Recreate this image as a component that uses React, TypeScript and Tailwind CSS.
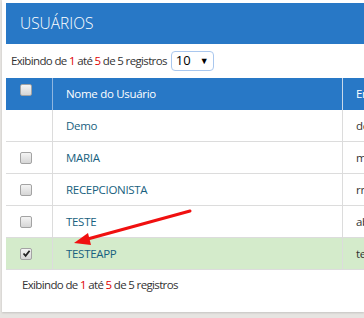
import React from 'react';

const rows = [
  { name: 'Demo', email: 'de', check: 'none' },
  { name: 'MARIA', email: 'm', check: 'off' },
  { name: 'RECEPCIONISTA', email: 'rn', check: 'off' },
  { name: 'TESTE', email: 'ab', check: 'off' },
  { name: 'TESTEAPP', email: 'te', check: 'on' },
];

function Box({ checked }: { checked?: boolean }) {
  return (
    <div className="w-[12px] h-[12px] rounded-[2px] border border-[#a3a3a3] bg-gradient-to-b from-[#f4f4f4] to-[#d6d6d6] flex items-center justify-center">
      {checked && (
        <svg width="9" height="9" viewBox="0 0 9 9">
          <path d="M1.5 4.5 L3.6 6.8 L7.6 1.8" stroke="#222" strokeWidth="1.8" fill="none" />
        </svg>
      )}
    </div>
  );
}

function Info() {
  return (
    <span>
      Exibindo de <span className="text-[#e00000]">1</span> até <span className="text-[#e00000]">5</span> de 5 registros
    </span>
  );
}

export default function App() {
  return (
    <div className="min-h-[318px] bg-[#e6e4e1] pl-[2px] overflow-hidden" style={{ fontFamily: '"Open Sans", sans-serif' }}>
      <div className="relative bg-white h-[312px] pl-[4px] pt-[3px] shadow-[0_1px_2px_rgba(0,0,0,0.15)]">
        <div className="h-[41px] bg-[#2878c6] flex items-center pl-[14px] text-white text-[15.5px] font-light">
          USUÁRIOS
        </div>
        <div className="h-[34px] flex items-center pl-[5px] text-[11.5px] text-[#333] tracking-[-0.65px]">
          <Info />
          <div className="ml-[4px] w-[43px] h-[20px] rounded-[4px] border border-[#a9c7ee] flex items-center justify-between px-[4px] text-[13px] text-black tracking-normal">
            <span>10</span>
            <span className="text-[9px]">▼</span>
          </div>
        </div>
        <div className="text-[11.5px] tracking-[-0.3px]">
          <div className="grid grid-cols-[47px_290px_1fr] h-[32px] bg-[#2878c6] text-white">
            <div className="flex items-start pt-[6px] pl-[14px] border-r border-[#8fb6e0]">
              <Box />
            </div>
            <div className="flex items-center pl-[13px] border-r border-[#c9d9ea]">Nome do Usuário</div>
            <div className="flex items-center pl-[13px]">Em</div>
          </div>
          {rows.map((r) => (
            <div
              key={r.name}
              className={`grid grid-cols-[47px_290px_1fr] h-[32px] border-b border-[#dcdcdc] ${r.check === 'on' ? 'bg-[#d4ebcb]' : 'bg-white'}`}
            >
              <div className="flex items-center pl-[14px] border-r border-[#dcdcdc]">
                {r.check !== 'none' && <Box checked={r.check === 'on'} />}
              </div>
              <div className="flex items-center pl-[13px] border-r border-[#dcdcdc] text-[#185f80]">{r.name}</div>
              <div className="flex items-center pl-[13px] text-[#333]">{r.email}</div>
            </div>
          ))}
          <div className="h-[30px] flex items-center pl-[16px] text-[#333] tracking-[-0.65px]">
            <Info />
          </div>
        </div>
        <svg className="absolute left-0 top-0 pointer-events-none" width="364" height="318">
          <line x1="188" y1="211" x2="82" y2="240" stroke="#f01010" strokeWidth="3" strokeLinecap="round" />
          <polygon points="72,243 86,233 89,245" fill="#f01010" />
        </svg>
      </div>
    </div>
  );
}
